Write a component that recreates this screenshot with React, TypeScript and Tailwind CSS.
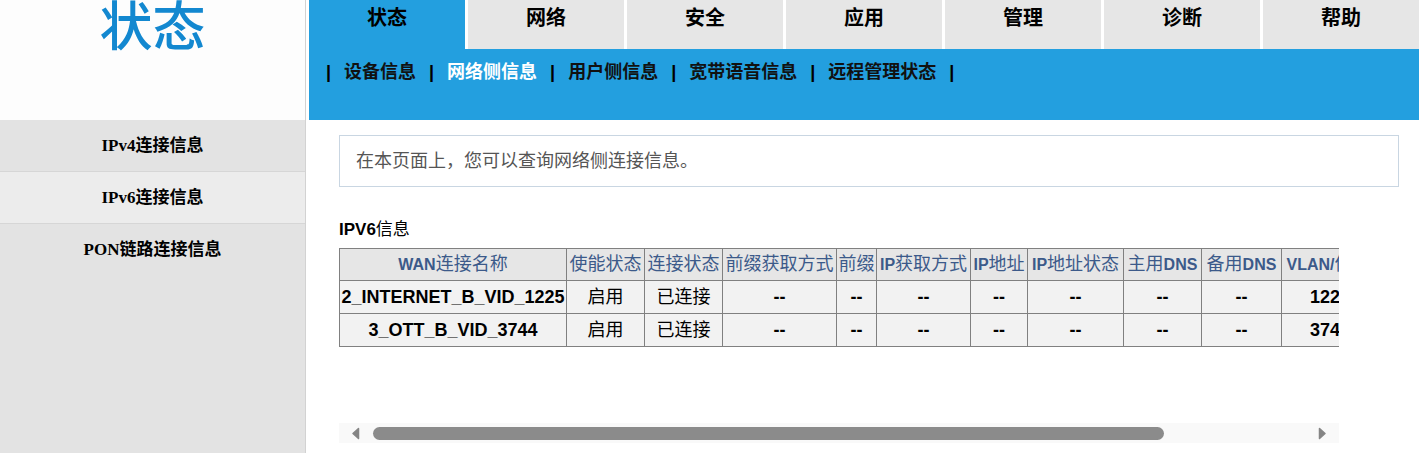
import React from "react";

const sans = "font-['Liberation_Sans','Noto_Sans_CJK_SC',sans-serif]";
const serif = "font-['Liberation_Serif','Noto_Sans_CJK_SC',serif]";

const tabs = ["状态", "网络", "安全", "应用", "管理", "诊断", "帮助"];

const subNav = ["设备信息", "网络侧信息", "用户侧信息", "宽带语音信息", "远程管理状态"];

const sideItems = ["IPv4连接信息", "IPv6连接信息", "PON链路连接信息"];

const columns = [
  { label: "WAN连接名称", width: "w-[227px]" },
  { label: "使能状态", width: "w-[78px]" },
  { label: "连接状态", width: "w-[78px]" },
  { label: "前缀获取方式", width: "w-[114px]" },
  { label: "前缀", width: "w-[40px]" },
  { label: "IP获取方式", width: "w-[94px]" },
  { label: "IP地址", width: "w-[57px]" },
  { label: "IP地址状态", width: "w-[96px]" },
  { label: "主用DNS", width: "w-[78px]" },
  { label: "备用DNS", width: "w-[80px]" },
  { label: "VLAN/优先级", width: "w-[112px]" },
  { label: "网关", width: "w-[146px]" },
];

const rows = [
  ["2_INTERNET_B_VID_1225", "启用", "已连接", "--", "--", "--", "--", "--", "--", "--", "1225/0", "--"],
  ["3_OTT_B_VID_3744", "启用", "已连接", "--", "--", "--", "--", "--", "--", "--", "3744/0", "--"],
];

function HeaderLabel({ text }: { text: string }) {
  const parts = text.split(/([A-Za-z/]+)/).filter(Boolean);
  return (
    <>
      {parts.map((part, i) =>
        /[A-Za-z]/.test(part) ? (
          <span key={i} className="text-[16px] font-bold">
            {part}
          </span>
        ) : (
          <span key={i}>{part}</span>
        )
      )}
    </>
  );
}

export default function App() {
  return (
    <div className={`flex min-h-screen bg-white ${sans}`}>
      {/* 左侧菜单 */}
      <aside className="flex w-[306px] shrink-0 flex-col border-r border-[#d2d2d2] bg-[#e3e3e3]">
        <div className="h-[120px] bg-[#fdfdfd] pt-[1px] text-center">
          <span className="text-[53px] font-medium leading-none text-[#1388d0]">状态</span>
        </div>
        {sideItems.map((item, i) => (
          <div
            key={item}
            className={`flex h-[52px] items-center justify-center text-[17px] font-bold text-black ${serif} ${
              i === 1 ? "bg-[#ececec]" : "bg-[#e3e3e3]"
            } ${i < 2 ? "border-b border-[#d6d6d6]" : ""}`}
          >
            {item}
          </div>
        ))}
      </aside>

      <main className="ml-[3px] flex w-[1110px] flex-col">
        {/* 顶部导航 */}
        <header className="h-[120px] bg-[#239fdf]">
          <nav className="grid h-[49px] grid-cols-7 gap-[3px] bg-white">
            {tabs.map((tab, i) => (
              <div
                key={tab}
                className={`pt-[4px] text-center text-[20px] font-bold leading-7 text-black ${
                  i === 0 ? "bg-[#239fdf]" : "bg-[#e6e6e6]"
                }`}
              >
                {tab}
              </div>
            ))}
          </nav>
          <div className="flex items-center gap-[13px] pl-[17px] pt-[12px] text-[18px] font-bold leading-[22px] text-black">
            <span>|</span>
            {subNav.map((item, i) => (
              <React.Fragment key={item}>
                <span className={i === 1 ? "text-white" : "text-[#111]"}>{item}</span>
                <span>|</span>
              </React.Fragment>
            ))}
          </div>
        </header>

        {/* 内容 */}
        <section className="pl-[30px] pr-[20px] pt-[15px]">
          <div className="flex h-[52px] items-center border border-[#c9d6e2] px-[16px] text-[18px] text-[#555]">
            在本页面上，您可以查询网络侧连接信息。
          </div>

          <h2 className="mt-[33px] text-[17px] leading-[20px] text-black">
            <span className="font-bold">IPV6</span>信息
          </h2>

          <div className="mt-[8px] w-[1000px]">
            <div className="overflow-hidden">
              <table className="w-[1200px] table-fixed border-collapse">
                <colgroup>
                  {columns.map((col) => (
                    <col key={col.label} className={col.width} />
                  ))}
                </colgroup>
                <thead>
                  <tr className="h-[32px] bg-[#e6e6e6]">
                    {columns.map((col) => (
                      <th
                        key={col.label}
                        className="overflow-hidden whitespace-nowrap border border-[#808080] px-0 text-center text-[18px] font-normal text-[#3c5a8a]"
                      >
                        <HeaderLabel text={col.label} />
                      </th>
                    ))}
                  </tr>
                </thead>
                <tbody>
                  {rows.map((row) => (
                    <tr key={row[0]} className="h-[33px] bg-[#f2f2f2]">
                      {row.map((cell, j) => (
                        <td
                          key={j}
                          className={`overflow-hidden whitespace-nowrap border border-[#808080] px-0 text-center text-[18px] text-black ${
                            /[\u4e00-\u9fff]/.test(cell) ? "font-normal" : "font-bold"
                          }`}
                        >
                          {cell}
                        </td>
                      ))}
                    </tr>
                  ))}
                </tbody>
              </table>
            </div>

            {/* 滚动条 */}
            <div className="mt-[76px] flex h-[20px] items-center bg-[#f9f9f9] pl-[12px] pr-[12px]">
              <svg width="9" height="13" viewBox="0 0 9 13" className="shrink-0">
                <path d="M7.5 1.5 L2 6.5 L7.5 11.5 Z" fill="#858585" stroke="#858585" strokeWidth="1.5" strokeLinejoin="round" />
              </svg>
              <div className="ml-[13px] h-[13px] w-[791px] rounded-full bg-[#8b8b8b]" />
              <div className="flex-1" />
              <svg width="9" height="13" viewBox="0 0 9 13" className="shrink-0">
                <path d="M1.5 1.5 L7 6.5 L1.5 11.5 Z" fill="#858585" stroke="#858585" strokeWidth="1.5" strokeLinejoin="round" />
              </svg>
            </div>
          </div>
        </section>
      </main>
    </div>
  );
}
